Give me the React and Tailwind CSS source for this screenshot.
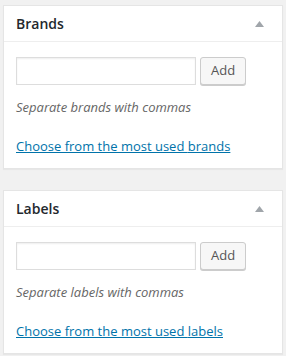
import { useState } from 'react'

function TagBox({ title, noun }) {
  const [value, setValue] = useState('')

  return (
    <div className="bg-white border border-[#e5e5e5] shadow-[0_1px_1px_rgba(0,0,0,0.04)]">
      {/* HEADER */}
      <div className="flex items-center justify-between border-b border-[#eeeeee] px-3 h-[36px]">
        <h2 className="text-[14px] font-semibold text-[#23282d] leading-none">{title}</h2>
        <svg width="9" height="6" viewBox="0 0 9 6" className="mr-[6px]">
          <polygon points="4.5,0 9,6 0,6" fill="#a0a5aa" />
        </svg>
      </div>

      {/* BODY */}
      <div className="px-3 pt-[15px] pb-[12px]">
        <div className="flex gap-[4px]">
          <input
            type="text"
            value={value}
            onChange={(e) => setValue(e.target.value)}
            className="w-[180px] h-[28px] border border-[#dddddd] shadow-[inset_0_1px_2px_rgba(0,0,0,0.07)] px-2 text-[13px] outline-none"
          />
          <button className="h-[28px] px-[10px] bg-[#f7f7f7] border border-[#cccccc] rounded-[3px] shadow-[0_1px_0_#cccccc] text-[13px] text-[#555555]">
            Add
          </button>
        </div>
        <p className="mt-[13px] text-[13px] italic text-[#666666] leading-[19px]">
          Separate {noun} with commas
        </p>
        <a href="#" className="block mt-[20px] text-[13px] text-[#0073aa] underline leading-[19px]">
          Choose from the most used {noun}
        </a>
      </div>
    </div>
  )
}

export default function App() {
  return (
    <div className="min-h-screen bg-[#f1f1f1] pt-[5px] pl-[3px] w-[286px] font-['Open_Sans',sans-serif]">
      <div className="w-[280px] flex flex-col gap-[21px]">
        <TagBox title="Brands" noun="brands" />
        <TagBox title="Labels" noun="labels" />
      </div>
    </div>
  )
}
